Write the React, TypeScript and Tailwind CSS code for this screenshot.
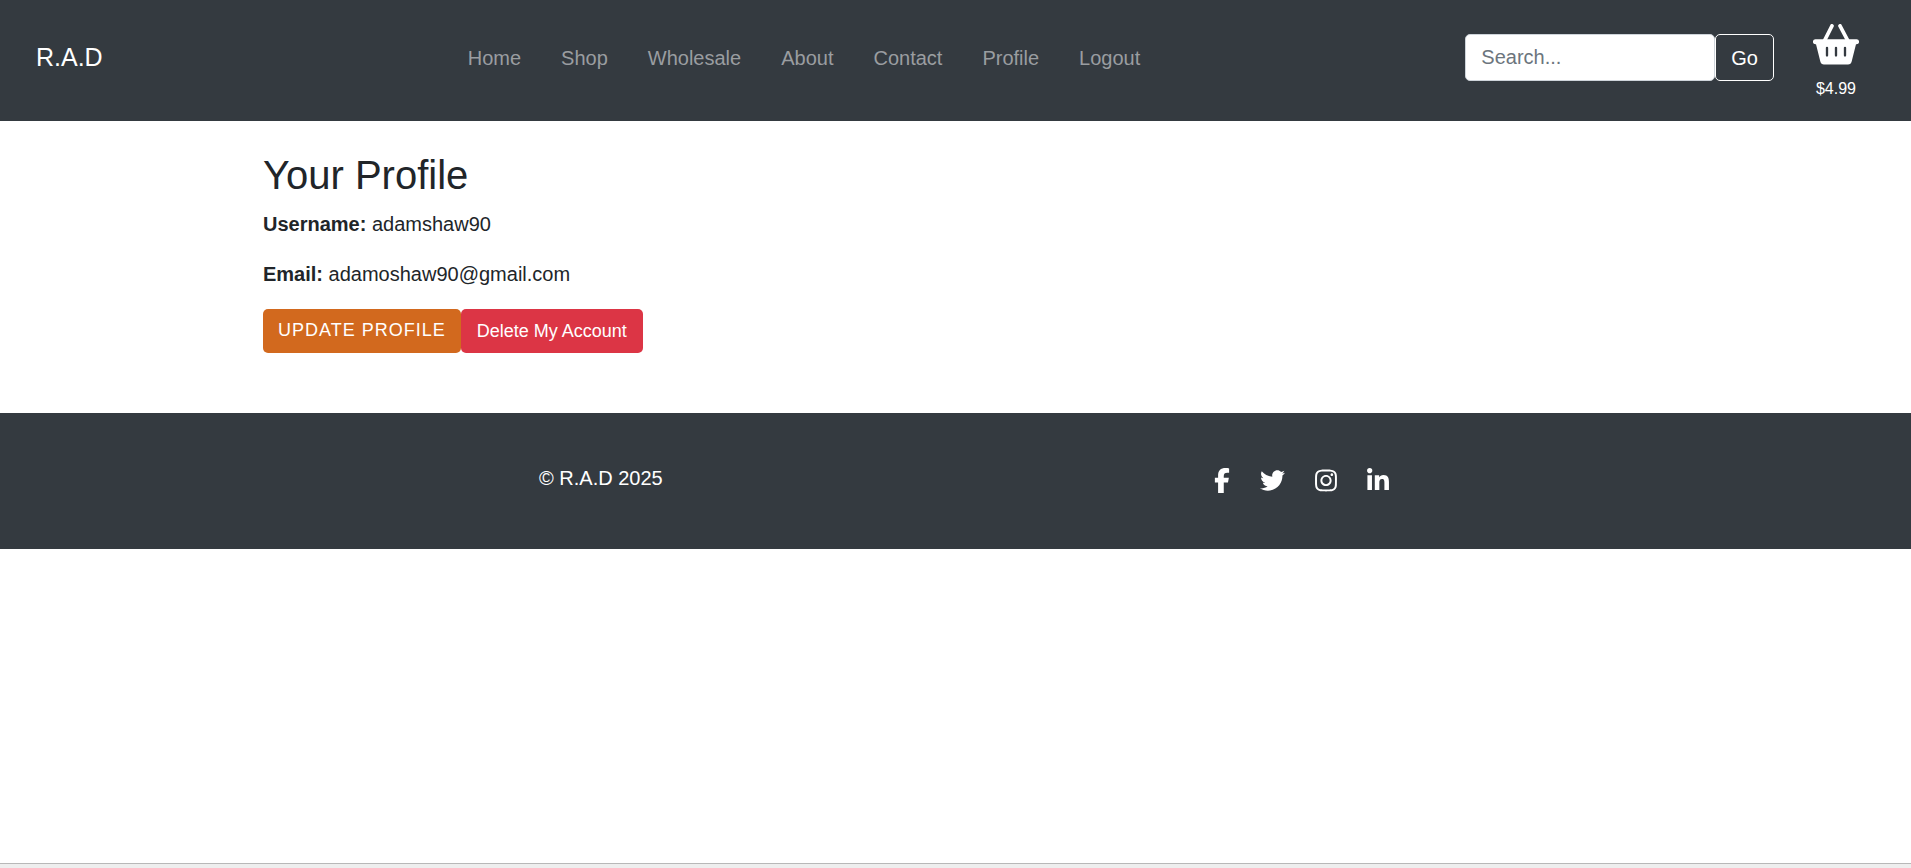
import React from "react";
import { FaFacebookF, FaInstagram, FaLinkedinIn, FaTwitter } from "react-icons/fa6";

const links = ["Home", "Shop", "Wholesale", "About", "Contact", "Profile", "Logout"];

const socials = [
  { label: "Facebook", Icon: FaFacebookF, size: "h-[25px] w-4" },
  { label: "Twitter", Icon: FaTwitter, size: "h-[25px] w-[25px]" },
  { label: "Instagram", Icon: FaInstagram, size: "h-[25px] w-[22px]" },
  { label: "LinkedIn", Icon: FaLinkedinIn, size: "h-[25px] w-[22px]" },
];

function BasketIcon() {
  return (
    <svg viewBox="0 0 138 123" className="h-[41px] w-[46px]" aria-hidden="true">
      <path
        d="M57 5.500 35 49M81 5.500l23 43.500"
        fill="none"
        stroke="currentColor"
        strokeWidth="11"
        strokeLinecap="round"
      />
      <path
        fill="currentColor"
        fillRule="evenodd"
        d="M7 46H131a7 7 0 0 1 0 14.500h-2l-13 52q-2 9-11 9H33q-9 0-11-9L9 60.500H7A7 7 0 0 1 7 46ZM38.500 71.500v23a3.500 3.500 0 0 0 7 0v-23a3.500 3.500 0 0 0-7 0Zm27 0v23a3.500 3.500 0 0 0 7 0v-23a3.500 3.500 0 0 0-7 0Zm27 0v23a3.500 3.500 0 0 0 7 0v-23a3.500 3.500 0 0 0-7 0Z"
      />
    </svg>
  );
}

function Header() {
  return (
    <header className="flex items-center bg-[#343a40] pt-[14px] pr-[52px] pb-5 pl-9 text-white">
      <a href="#" className="mr-10 pb-[2px] text-[25px] leading-9">
        R.A.D
      </a>
      <nav className="mx-auto flex text-[#9a9da0]">
        {links.map((link) => (
          <a key={link} href="#" className="px-5 py-2">
            {link}
          </a>
        ))}
      </nav>
      <form className="flex" onSubmit={(e) => e.preventDefault()}>
        <input
          type="search"
          aria-label="Search"
          placeholder="Search..."
          className="h-[47px] w-[250px] rounded-[5px] border border-[#ced4da] bg-white px-[15px] text-[#495057] placeholder:text-[#6c757d]"
        />
        <button type="submit" className="h-[47px] rounded-[5px] border border-white px-[15px]">
          Go
        </button>
      </form>
      <a href="#" aria-label="Shopping basket" className="ml-[39px] flex flex-col items-center pt-[10px]">
        <BasketIcon />
        <span className="mt-3 text-base">$4.99</span>
      </a>
    </header>
  );
}

function ProfilePanel() {
  return (
    <main className="mx-auto w-full max-w-[1425px] px-5 pt-[30px] pb-[60px]">
      <h1 className="mb-[10px] text-[40px] leading-12">Your Profile</h1>
      <p className="mb-5">
        <strong>Username:</strong> adamshaw90
      </p>
      <p className="mb-5">
        <strong>Email:</strong> adamoshaw90@gmail.com
      </p>
      <div className="flex text-lg leading-[26px] text-white">
        <button type="button" className="h-11 rounded-[5px] bg-[#d2691e] px-[15px] pb-[2px] tracking-[1px] uppercase">
          Update Profile
        </button>
        <button type="button" className="h-11 rounded-[5px] bg-[#dc3545] px-4">
          Delete My Account
        </button>
      </div>
    </main>
  );
}

function Footer() {
  return (
    <footer className="bg-[#343a40] pt-[50px] pb-[51px] text-white">
      <div className="mx-auto grid max-w-[1425px] grid-cols-2 items-start px-5">
        <p className="pl-[276px]">© R.A.D 2025</p>
        <div className="flex items-center gap-[30px] pl-[258px]">
          {socials.map(({ label, Icon, size }) => (
            <a key={label} href="#" aria-label={label} className="py-[5px]">
              <Icon className={size} />
            </a>
          ))}
        </div>
      </div>
    </footer>
  );
}

export default function App() {
  return (
    <div className="flex min-h-screen flex-col bg-white font-['Liberation_Sans',Arial,sans-serif] text-[20px] leading-[30px] text-[#212529]">
      <Header />
      <ProfilePanel />
      <Footer />
      <div className="mt-auto h-[5px] border-t border-[#b8b8b8] bg-[#eeeeee]" />
    </div>
  );
}
